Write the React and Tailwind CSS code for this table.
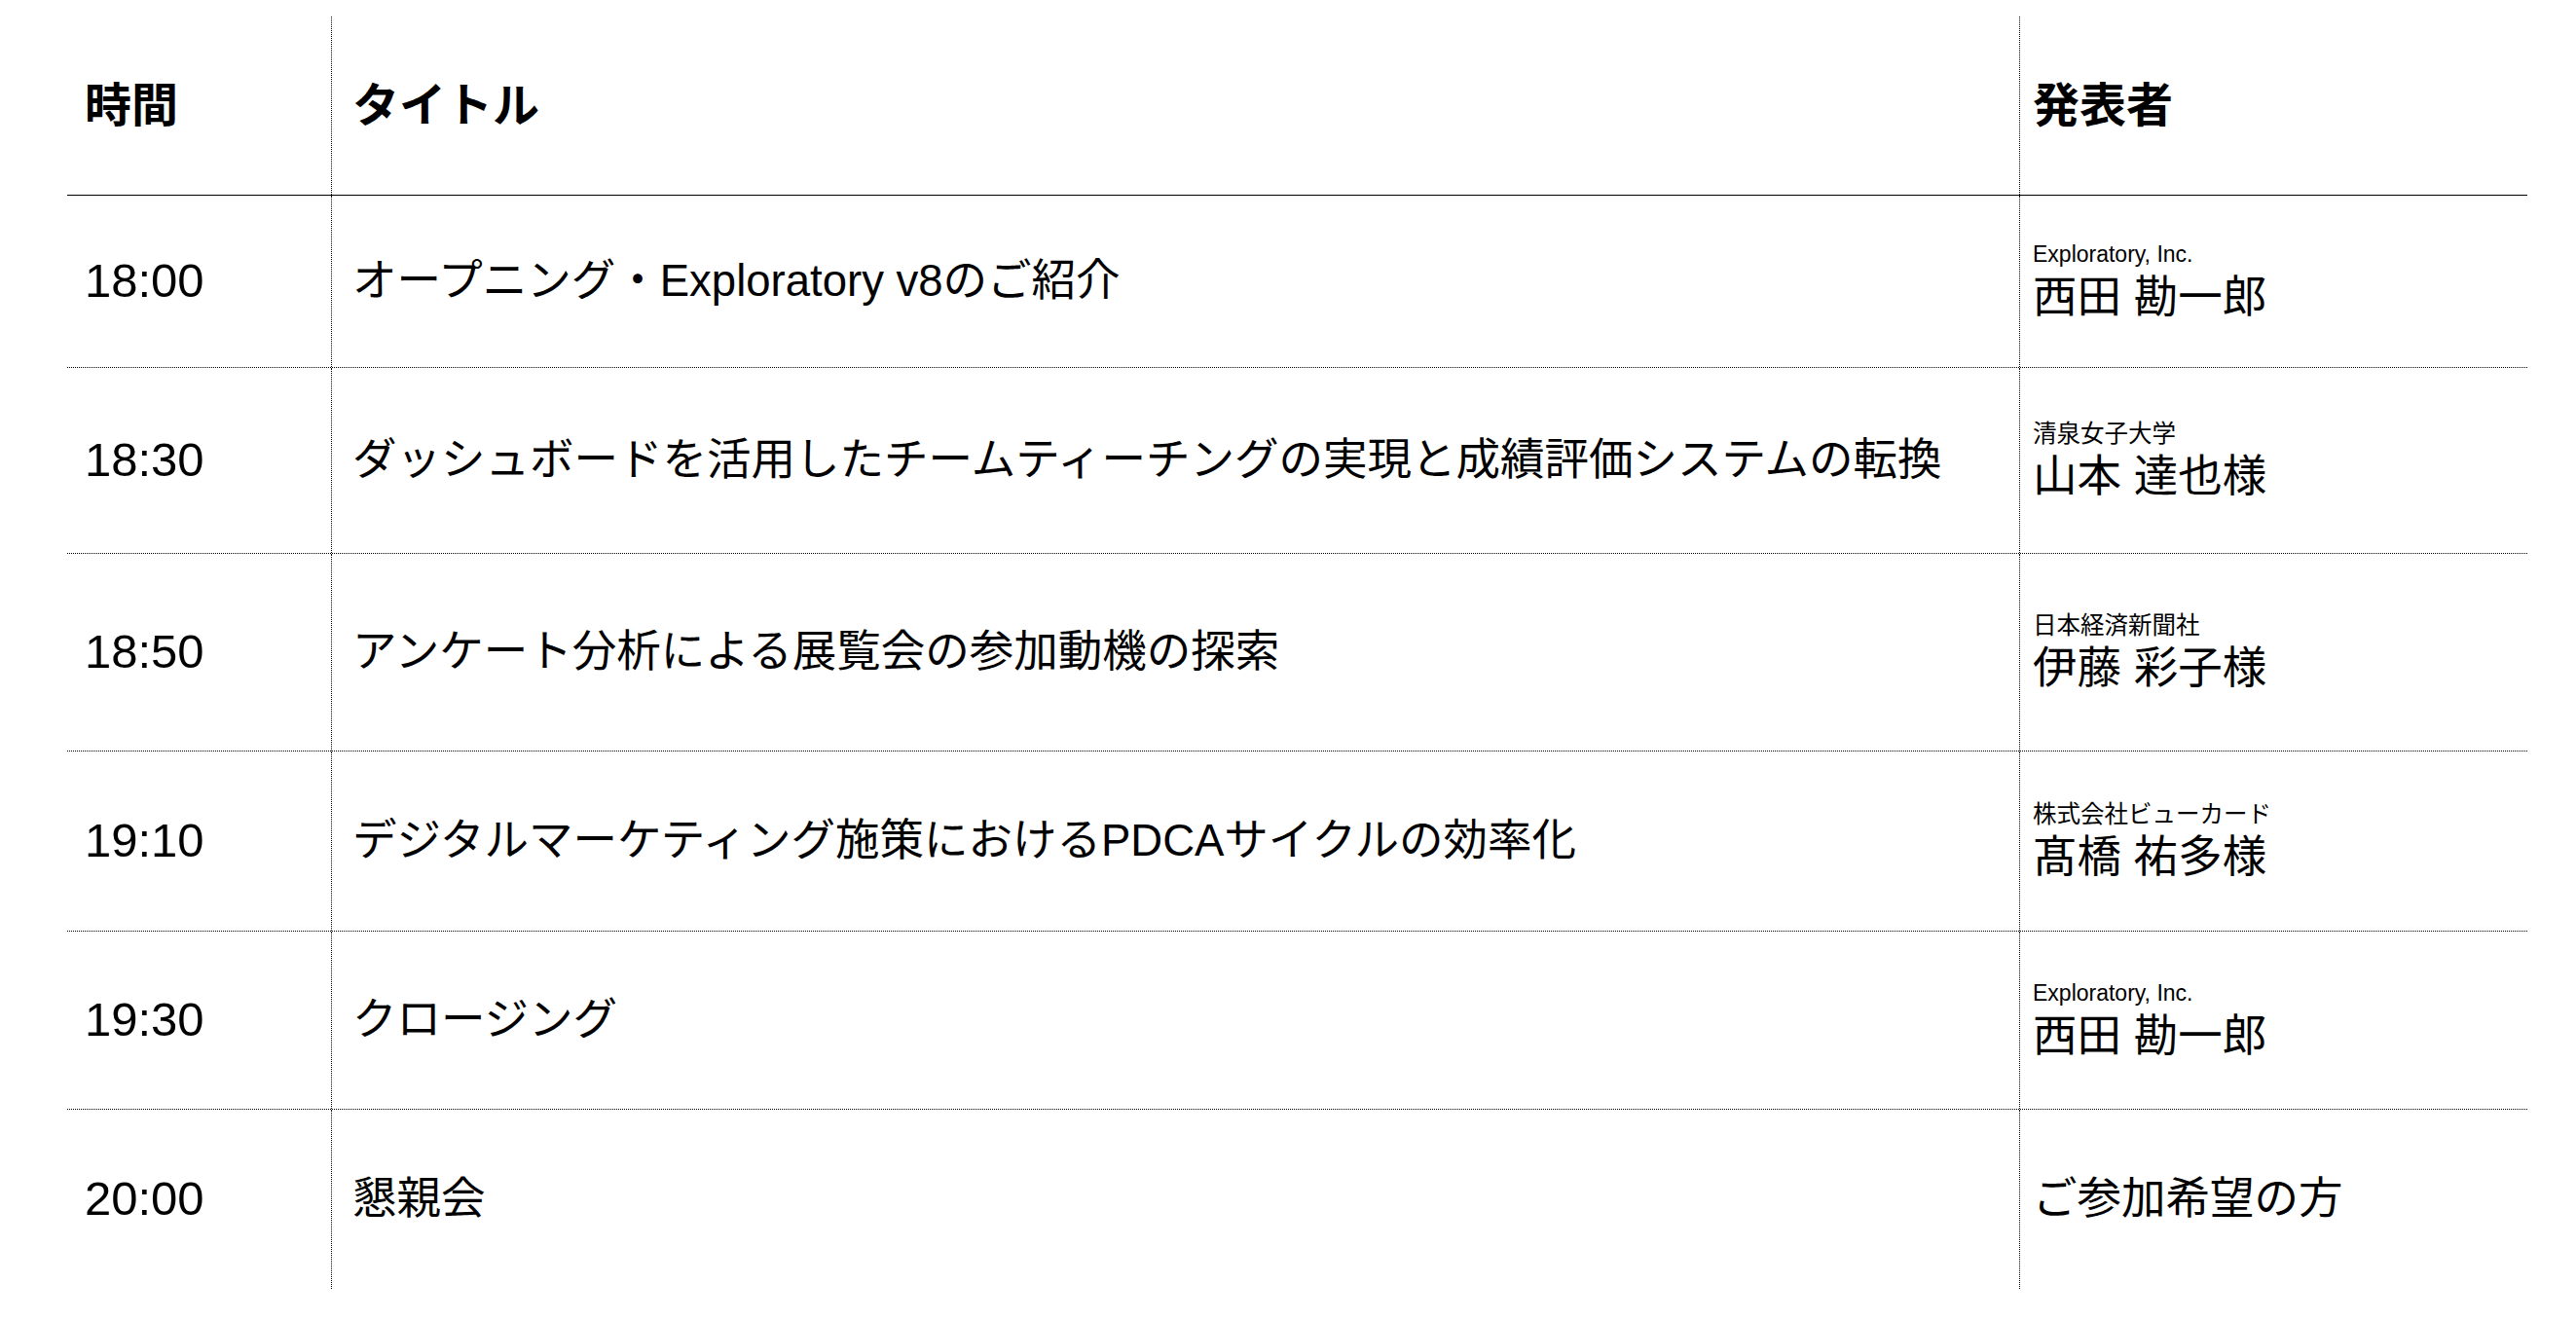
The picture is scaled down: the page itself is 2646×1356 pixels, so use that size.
const rows = [
  { time: "18:00", title: "オープニング・Exploratory v8のご紹介", org: "Exploratory, Inc.", latin: true, name: "西田 勘一郎", h: "h-[177px]" },
  { time: "18:30", title: "ダッシュボードを活用したチームティーチングの実現と成績評価システムの転換", org: "清泉女子大学", name: "山本 達也様", h: "h-[191px]" },
  { time: "18:50", title: "アンケート分析による展覧会の参加動機の探索", org: "日本経済新聞社", name: "伊藤 彩子様", h: "h-[203px]" },
  { time: "19:10", title: "デジタルマーケティング施策におけるPDCAサイクルの効率化", org: "株式会社ビューカード", name: "髙橋 祐多様", h: "h-[185px]" },
  { time: "19:30", title: "クロージング", org: "Exploratory, Inc.", latin: true, name: "西田 勘一郎", h: "h-[183px]" },
  { time: "20:00", title: "懇親会", org: null, name: "ご参加希望の方", h: "h-[184px]" },
];

const font = "font-['Liberation_Sans','Noto_Sans_CJK_JP',sans-serif]";

// column paddings differ slightly to line up with the reference
function Cell({ children, col }) {
  const pad = col === 0 ? "pl-[18px]" : col === 1 ? "pl-[21px] border-l border-dotted border-black" : "pl-[13px] border-l border-dotted border-black";
  return <div className={`flex flex-col justify-center pr-[10px] ${pad}`}>{children}</div>;
}

export default function App() {
  return (
    <div className={`min-h-screen bg-white text-black ${font}`}>
      <div className="pt-[17px] ml-[69px] w-[2527px]">
        <div className="grid grid-cols-[271px_1734px_522px] h-[184px] border-b border-black text-[48px] font-bold leading-normal">
          <Cell col={0}>時間</Cell>
          <Cell col={1}>タイトル</Cell>
          <Cell col={2}>発表者</Cell>
        </div>
        {rows.map((r, i) => (
          <div
            key={i}
            className={`grid grid-cols-[271px_1734px_522px] ${r.h} ${i < rows.length - 1 ? "border-b border-dotted border-black" : ""} text-[45.5px] leading-normal`}
          >
            <Cell col={0}><span className="text-[49px]">{r.time}</span></Cell>
            <Cell col={1}><span className="whitespace-nowrap">{r.title}</span></Cell>
            <Cell col={2}>
              {r.org && (
                <div className={`${r.latin ? "text-[23px] leading-[1.5]" : "text-[24.5px] leading-[1.4]"} whitespace-nowrap`}>{r.org}</div>
              )}
              <div className={`whitespace-nowrap ${r.org ? "leading-[1.2]" : ""}`}>{r.name}</div>
            </Cell>
          </div>
        ))}
      </div>
    </div>
  );
}
